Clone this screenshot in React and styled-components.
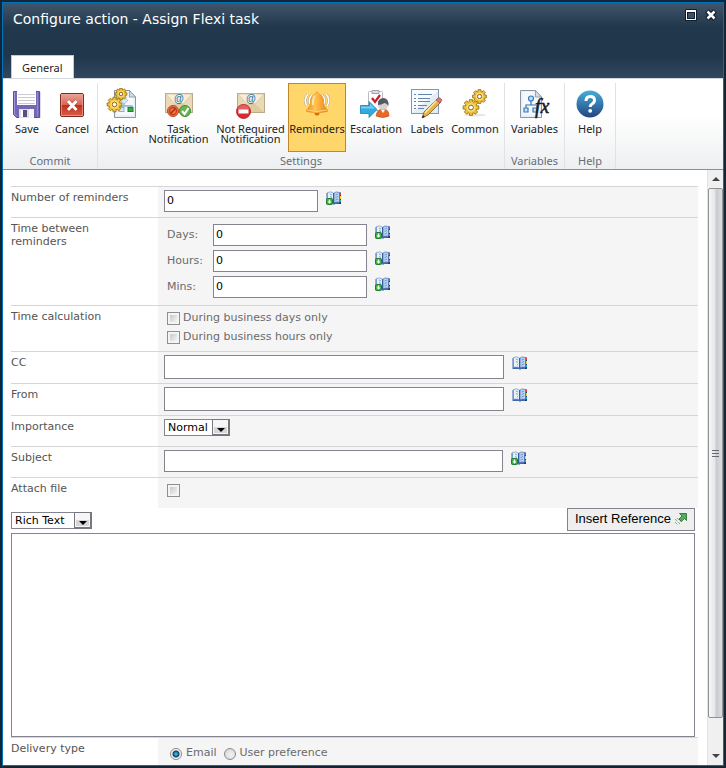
import React from "react";
import styled, { createGlobalStyle } from "styled-components";

const Global = createGlobalStyle`
  * { box-sizing: border-box; }
  html, body { margin: 0; background: #3c4650; }
  body, input, select, textarea { font-family: "DejaVu Sans", sans-serif; font-size: 11px; }
`;

/* ---------- window frame ---------- */

const Backdrop = styled.div`
  height: 100vh;
  min-height: 480px;
  padding: 2px;
  background: #142536;
`;

const Dialog = styled.section`
  height: 100%;
  display: flex;
  flex-direction: column;
  border: 1px solid #0072bc;
  background: #fff;
  overflow: hidden;
`;

const Header = styled.header`
  display: flex;
  flex-direction: column;
  justify-content: space-between;
  flex: none;
  height: 75px;
  background: linear-gradient(#41566b, #21374c 24px, #21374c 54px, #31475f);
`;

const TitleBar = styled.div`
  display: flex;
  align-items: flex-start;
  justify-content: space-between;
  padding: 6px 6px 0 10px;
`;

const Title = styled.h1`
  margin: 0;
  font-size: 14px;
  line-height: 20px;
  font-weight: normal;
  color: #fff;
`;

const WindowButtons = styled.div`
  display: flex;
  gap: 8px;
`;

const WindowButton = styled.button`
  display: flex;
  padding: 0;
  border: 0;
  background: none;
`;

const Tabs = styled.div`
  display: flex;
  padding-left: 8px;
`;

const Tab = styled.button`
  height: 23px;
  padding: 1px 10px 0;
  border: 1px solid #c3cad2;
  border-bottom: 0;
  background: #fff;
  color: #222;
  font: 11px "Noto Sans", sans-serif;
`;

/* ---------- ribbon ---------- */

const Ribbon = styled.nav`
  display: flex;
  flex: none;
  height: 92px;
  padding-top: 4px;
  border-top: 1px solid #d3d8de;
  border-bottom: 1px solid #8b9097;
  background: linear-gradient(#fff 40%, #eeeff1);
`;

const Group = styled.div`
  display: flex;
  flex-direction: column;
  justify-content: space-between;
  padding: 0 2px;
  border-right: 1px solid #e0e2e5;
`;

const GroupButtons = styled.div`
  display: flex;
`;

const GroupName = styled.div`
  height: 16px;
  color: #666d78;
  text-align: center;
  font: 11px/15px "Noto Sans", sans-serif;
`;

const Tool = styled.button`
  display: flex;
  flex-direction: column;
  align-items: center;
  gap: 4px;
  width: ${(p) => p.$width}px;
  height: 69px;
  padding: 4px 0 0;
  border: 1px solid ${(p) => (p.$active ? "#c2862b" : "transparent")};
  background: ${(p) => (p.$active ? "#ffd669" : "transparent")};
  color: #222;
  font: 11px/10px "Noto Sans", sans-serif;
`;

const ToolText = styled.span`
  text-align: center;
`;

/* ---------- form ---------- */

const Body = styled.main`
  display: flex;
  flex: 1;
  min-height: 0;
`;

const Form = styled.form`
  flex: 1;
  min-width: 0;
  overflow: hidden;
  padding: 16px 9px 0 8px;
`;

const Row = styled.div`
  display: grid;
  grid-template-columns: 147px 1fr;
  min-height: ${(p) => p.$height}px;
  border-top: 1px solid #d6d6d6;
  color: #555;
`;

const Name = styled.label`
  padding: 4px 20px 0 0;
  line-height: 13px;
`;

const Field = styled.div`
  display: flex;
  flex-direction: ${(p) => (p.$stack ? "column" : "row")};
  align-items: flex-start;
  gap: ${(p) => p.$gap ?? 8}px;
  padding: ${(p) => p.$pad ?? "3px 0 0 6px"};
  background: #f5f5f5;
  color: #6b6b6b;
`;

const TextBox = styled.input`
  width: ${(p) => p.$width}px;
  height: ${(p) => p.$height ?? 22}px;
  padding: 0 2px 2px;
  border: 1px solid #83848f;
  border-radius: 0;
  background: #fff;
  color: #000;
`;

const Duration = styled.div`
  display: grid;
  grid-template-columns: 46px auto;
  line-height: 22px;
`;

const DurationEntry = styled.div`
  display: flex;
  gap: 8px;
`;

const LookupButton = styled.button`
  display: flex;
  align-self: flex-start;
  padding: 1px 0 0;
  border: 0;
  background: none;
`;

const Choice = styled.label`
  display: flex;
  align-items: center;
  gap: 3px;
  line-height: 13px;
`;

const ChoiceText = styled.span`
  padding-bottom: 2px;
`;

const CheckBox = styled.input`
  appearance: none;
  width: 13px;
  height: 13px;
  margin: 0;
  border: 1px solid #8e8f8f;
  background: linear-gradient(135deg, #c4c8cd, #f4f4f4) content-box, #f4f4f4;
  padding: 2px;
`;

const Radio = styled.input`
  appearance: none;
  width: 12px;
  height: 12px;
  margin: 0 1px 0 0;
  border: 1px solid #8a8a8a;
  border-radius: 50%;
  background: radial-gradient(circle at 60% 60%, #f2f2f2, #cfd2d6);
  &:checked {
    background: radial-gradient(circle, #5cc3ef 0, #1879a8 2px, #123a58 3px, #f4f4f4 4px);
  }
`;

const SelectBox = styled.span`
  position: relative;
  display: inline-flex;
  width: ${(p) => p.$width}px;
  height: 17px;
`;

const SelectInput = styled.select`
  appearance: none;
  width: 100%;
  padding: 0 18px 0 3px;
  border: 1px solid #83848f;
  border-radius: 0;
  background: #fff;
  color: #000;
`;

const SelectArrow = styled.svg`
  position: absolute;
  top: 0;
  right: 0;
  pointer-events: none;
`;

const EditorBar = styled.div`
  display: flex;
  align-items: center;
  justify-content: space-between;
  height: 25px;
  padding-right: 3px;
`;

const InsertButton = styled.button`
  display: flex;
  align-items: center;
  gap: 3px;
  height: 23px;
  margin-bottom: 2px;
  padding: 0 6px 2px 7px;
  border: 1px solid #83848f;
  background: #efefef;
  color: #000;
  font: 13px "Liberation Sans", sans-serif;
`;

const EditorPane = styled.div`
  display: flex;
  padding-right: 3px;
`;

const Editor = styled.textarea`
  flex: 1;
  height: 204px;
  border: 1px solid #83848f;
  resize: none;
`;

/* ---------- scroll bar ---------- */

const ScrollBar = styled.div`
  display: flex;
  flex-direction: column;
  flex: none;
  width: 16px;
  border-left: 1px solid #e3e3e3;
  background: #f0f0f0;
`;

const ScrollEnd = styled.button`
  display: flex;
  align-items: center;
  justify-content: center;
  height: 18px;
  padding: 0;
  border: 0;
  background: none;
`;

const Thumb = styled.div`
  display: flex;
  align-items: center;
  justify-content: center;
  flex: 1;
  margin-bottom: 29px;
  border: 1px solid #8f9195;
  border-radius: 2px;
  background: linear-gradient(90deg, #f6f6f6, #e6e7e9 45%, #c8cacf 55%, #dcdde0);
`;

/* ---------- icons ---------- */

const gearPath = (cx, cy, r) => {
  const teeth = 8;
  const points = [];
  for (let i = 0; i < teeth; i++) {
    const a = (i * 2 * Math.PI) / teeth;
    [[-0.3, 0.74], [-0.2, 1], [0.2, 1], [0.3, 0.74]].forEach(([d, k]) =>
      points.push(`${(cx + Math.cos(a + d) * r * k).toFixed(2)} ${(cy + Math.sin(a + d) * r * k).toFixed(2)}`)
    );
  }
  return `M${points.join("L")}Z`;
};

const Gear = ({ x, y, r }) => (
  <g>
    <path d={gearPath(x, y, r)} fill="#efc238" stroke="#98700f" strokeWidth=".9" />
    <circle cx={x} cy={y} r={r * 0.54} fill="#f8de83" />
    <circle cx={x} cy={y} r={r * 0.3} fill="#fff" stroke="#8a6612" strokeWidth="1" />
  </g>
);

const Icon = ({ children }) => (
  <svg width="32" height="32" viewBox="0 0 32 32" aria-hidden="true">{children}</svg>
);

const Page = ({ x }) => (
  <g>
    <path d={`M${x} 2.500h15l6 6.500v20.500h-21Z`} fill="#eaf0f9" stroke="#8895a5" />
    <path d={`M${x + 2} 4h11v6h6v17h-17Z`} fill="#fff" opacity=".55" />
    <path d={`M${x + 15} 2.500v6.500h6Z`} fill="#d3dce8" stroke="#8895a5" strokeWidth=".8" />
  </g>
);

const At = styled.text`
  font: bold 10px "Liberation Sans", sans-serif;
  fill: #1c80b3;
  text-anchor: middle;
`;

const Envelope = () => (
  <g>
    <rect x="2.500" y="5.500" width="27" height="19" fill="#ead9b6" stroke="#b9aa88" />
    <path d="M3 24l10-9h6l10 9Z" fill="#dfcba0" />
    <path d="M3 6h26l-8 9q-1 1-3 1h-4q-2 0-3-1Z" fill="#f7edd8" stroke="#d3c29d" strokeWidth=".7" />
    <At x="16" y="14">@</At>
  </g>
);

const SaveIcon = () => (
  <Icon>
    <path d="M4 4h26v26H7l-3-3Z" fill="#c5c4cf" opacity=".6" />
    <path d="M2.500 3.500h26v26h-23l-3-3Z" fill="#7567b8" stroke="#5c4e9d" />
    <path d="M3.500 4v22l2 2" fill="none" stroke="#a096d8" />
    <path d="M6 3h19v14H6Z" fill="#fff" />
    <path d="M7 6.500h17M7 9.500h17M7 12.500h17M7 15.500h17" stroke="#cbcbd2" />
    <path d="M8 21h15v9H8Z" fill="#dedee6" />
    <path d="M10 22h6v7h-6Z" fill="#57507d" />
    <path d="M10 22h2v7h-2Z" fill="#fff" />
    <path d="M18 21h5v9h-5Z" fill="#f7f7fa" />
    <path d="M26.500 4v25" stroke="#9388cc" />
  </Icon>
);

const CancelIcon = () => (
  <Icon>
    <defs>
      <linearGradient id="cancel" x2="0" y2="1">
        <stop stopColor="#eaa79c" />
        <stop offset=".48" stopColor="#d96755" />
        <stop offset=".5" stopColor="#c32d18" />
        <stop offset="1" stopColor="#d9604a" />
      </linearGradient>
    </defs>
    <rect x="4.500" y="5.500" width="23" height="23" rx="1.500" fill="url(#cancel)" stroke="#7d2a20" />
    <rect x="5.500" y="6.500" width="21" height="21" fill="none" stroke="#eda397" opacity=".7" />
    <path d="M12 13l8.500 9M20.500 13l-8.500 9" stroke="#8d2619" strokeWidth="4.500" opacity=".4" />
    <path d="M12 13l8.500 9M20.500 13l-8.500 9" stroke="#fff" strokeWidth="3" />
  </Icon>
);

const ActionIcon = () => (
  <Icon>
    <Page x={8.5} />
    <path d="M18 13v5h8v3M18 18h-4v3" fill="none" stroke="#86afd0" strokeWidth="1.3" />
    <path d="M18 9l4 3.500-4 3.500-4-3.500Z" fill="#d4e8fa" stroke="#8fbbe0" strokeWidth=".7" />
    <rect x="22" y="19.500" width="5" height="4" fill="#36ae3c" stroke="#24802c" />
    <rect x="13" y="19.500" width="5" height="4" fill="#d9e9f5" stroke="#88b3cf" />
    <Gear x={15} y={6} r={6} />
    <Gear x={8.5} y={16.5} r={7.5} />
  </Icon>
);

const TaskIcon = () => (
  <Icon>
    <Envelope />
    <circle cx="10" cy="23" r="5.500" fill="#f1764a" stroke="#c9451d" />
    <circle cx="10" cy="23" r="3.500" fill="none" stroke="#b9401f" strokeWidth="1.300" />
    <path d="M7.500 25.500l5-5" stroke="#a42c15" strokeWidth="1.500" />
    <circle cx="22" cy="23" r="5.500" fill="#69b651" stroke="#3f8a38" />
    <path d="M19 23l2.500 3 4-6" fill="none" stroke="#fff" strokeWidth="2" />
  </Icon>
);

const NotRequiredIcon = () => (
  <Icon>
    <Envelope />
    <circle cx="8.500" cy="23.500" r="7" fill="#d92c31" stroke="#a8181e" strokeWidth=".8" />
    <path d="M2.500 21a6.500 6.500 0 0 1 12 0q-6 3-12 0Z" fill="#f58a86" opacity=".55" />
    <rect x="3.500" y="21.500" width="10" height="4" fill="#fff" />
  </Icon>
);

const BellIcon = () => (
  <Icon>
    <defs>
      <linearGradient id="bell" x2="1" y2="0">
        <stop stopColor="#f28a12" />
        <stop offset=".4" stopColor="#ffc554" />
        <stop offset="1" stopColor="#ef8112" />
      </linearGradient>
    </defs>
    <g fill="none" stroke="#b5a98f" strokeWidth="2.600">
      <path d="M7 6q-5 6-1 12M11 7q-4 4-2 9M25 6q5 6 1 12M21 7q4 4 2 9" />
    </g>
    <g fill="none" stroke="#fff" strokeWidth="1.500">
      <path d="M7 6q-5 6-1 12M11 7q-4 4-2 9M25 6q5 6 1 12M21 7q4 4 2 9" />
    </g>
    <circle cx="16" cy="25" r="2.500" fill="#d9680b" />
    <path d="M14.500 6q0-2 1.500-2t1.500 2q5 1 5 8 0 4 4 8v1.500q-10.500 3-21 0V22q4-4 4-8 0-7 5-8Z" fill="url(#bell)" stroke="#e98a1c" strokeWidth=".5" />
    <path d="M6 22q10 3 20 0" fill="none" stroke="#fbd27a" />
    <path d="M13.500 8q-2 3-1.500 9" fill="none" stroke="#ffe5a8" strokeWidth="1.800" />
  </Icon>
);

const EscalationIcon = () => (
  <Icon>
    <rect x="8.500" y="3.500" width="14" height="19" rx="1" fill="#fff" stroke="#b9bbc1" />
    <path d="M12 2.500h7v3h-7Z" fill="#dcdde2" stroke="#9fa2a9" />
    <path d="M12 10l3 4 5-7" fill="none" stroke="#c91f27" strokeWidth="2.200" />
    <path d="M0.500 17.500H9v-4l8 8-8 8v-4H.5Z" fill="#32abe0" stroke="#137db2" strokeWidth=".8" />
    <path d="M1 18.500h9v-3l5 5H1Z" fill="#79cdf0" />
    <path d="M16 28q1-7 7-7 6 0 6 7-6 3-13 0Z" fill="#e96927" stroke="#bc4814" strokeWidth=".6" />
    <circle cx="23" cy="17" r="5" fill="#d9d2cf" />
    <path d="M18 17q-1-6 5-7 6 0 5.500 8-2-3-4-3-3 2-6.500 2Z" fill="#565a61" />
    <path d="M21 22l2 3 2-3Z" fill="#fff" />
  </Icon>
);

const LabelsIcon = () => (
  <Icon>
    <rect x="0.500" y="1.500" width="27" height="24" fill="#f8fbff" stroke="#7c96b4" />
    <path d="M1 25L27 3v22Z" fill="#e3ebf5" />
    <path d="M3 6.500h2M7 6.500h14M3 10.500h2M7 10.500h12M3 13.500h2M7 13.500h12M3 17.500h2M7 17.500h9M3 20.500h2M7 20.500h6" stroke="#6285ac" />
    <path d="M11 30l2-6 13-13 4 3-13 13Z" fill="#e5b34c" stroke="#825f25" strokeWidth=".8" />
    <path d="M14 25L26 12" stroke="#ffe795" strokeWidth="1.500" />
    <path d="M25 12l2-2q2-1 4 2l-2 3Z" fill="#d97c7f" stroke="#8f4048" strokeWidth=".7" />
    <path d="M11 30l1-3 2 2Z" fill="#222" />
  </Icon>
);

const CommonIcon = () => (
  <Icon>
    <ellipse cx="16" cy="27" rx="11" ry="1.500" fill="#e6e6e6" />
    <Gear x={20.5} y={8.5} r={7} />
    <Gear x={12} y={19.5} r={8} />
  </Icon>
);

const Formula = styled.text`
  font: italic 20px "Liberation Serif", serif;
  fill: #17191d;
  stroke: #17191d;
  stroke-width: 0.5px;
`;

const VariablesIcon = () => (
  <Icon>
    <Page x={1.5} />
    <path d="M12 12v5M7 20v-3h11v4" fill="none" stroke="#3775af" strokeWidth="1.200" />
    <circle cx="12" cy="10.500" r="2.500" fill="#bfdef3" stroke="#367bb9" strokeWidth="1.200" />
    <path d="M5 20h4v4H5ZM14 20h4v4h-4Z" fill="#cce1f3" stroke="#367bb9" strokeWidth="1.200" />
    <Formula x="16" y="25">fx</Formula>
  </Icon>
);

const HelpIcon = () => (
  <Icon>
    <defs>
      <linearGradient id="help" x2="0" y2="1">
        <stop stopColor="#48add9" />
        <stop offset="1" stopColor="#214481" />
      </linearGradient>
    </defs>
    <circle cx="16" cy="16" r="13.500" fill="url(#help)" />
    <path d="M12 13q0-4.500 4.200-4.500 4.300 0 4.300 3.800 0 2.200-2.500 3.700-1.800 1-1.800 3" fill="none" stroke="#fff" strokeWidth="3" />
    <circle cx="16.200" cy="22.800" r="1.900" fill="#fff" />
  </Icon>
);

const BookIcon = ({ add }) => (
  <svg width="16" height="14" viewBox="0 0 16 14" aria-hidden="true">
    <path d="M.5 2H15v11H9l-1 1-1-1H.5Z" fill="#3f69aa" />
    <path d="M13 1.500h2v11.500h-2Z" fill="#263c66" />
    <path d="M14 2h1v2h-1Z" fill="#f03a48" />
    <path d="M14 5h1v3h-1Z" fill="#f6d32c" />
    <path d="M14 9h1v2h-1Z" fill="#22b2d0" />
    <path d="M1.500 1.500q4-1.500 6.200.8v9.700q-2-1.500-6.200-.8Z" fill="#e6f0fd" stroke="#6f94c9" strokeWidth=".7" />
    <path d="M13.500 1.500q-4-1.500-5.800.8v9.700q2-1.500 5.800-.8Z" fill="#b9d2f3" stroke="#4d76b6" strokeWidth=".7" />
    <path d="M7.700 2v10" stroke="#2c5292" />
    <path d="M9.500 4l2.500-1M9.500 6.500l2.500-1M9.500 9l2.500-1M4 3l2 1M4 5.500l2 1M5 8.500l1 .5" stroke="#6389c4" strokeWidth=".8" />
    {add && (
      <g>
        <rect x=".500" y="7.500" width="6" height="6" rx="1" fill="#3bab48" stroke="#1b8029" />
        <path d="M2.800 8.500h1.400v2h1.300l-2 2.200-2-2.200h1.300Z" fill="#fff" />
      </g>
    )}
  </svg>
);

const Lookup = ({ add, label }) => (
  <LookupButton type="button" aria-label={label}>
    <BookIcon add={add} />
  </LookupButton>
);

const Select = ({ id, width, options, label }) => (
  <SelectBox $width={width}>
    <SelectInput id={id} aria-label={label}>
      {options.map((o) => <option key={o}>{o}</option>)}
    </SelectInput>
    <SelectArrow width="18" height="17" viewBox="0 0 18 17" aria-hidden="true">
      <path d="M.500 1h16.500v15H.500Z" fill="#f6f6f6" />
      <path d="M.500 0v17M0 .500h18" stroke="#77777f" />
      <path d="M17 0v17M0 16h18" stroke="#77777f" strokeWidth="2" />
      <path d="M2 8h13v6H2Z" fill="#d6d6d8" />
      <path d="M5 9h8l-4 4Z" fill="#000" />
    </SelectArrow>
  </SelectBox>
);

/* ---------- content ---------- */

const groups = [
  { name: "Commit", tools: [
    { name: "Save", icon: SaveIcon, width: 44 },
    { name: "Cancel", icon: CancelIcon, width: 46 },
  ] },
  { name: "Settings", tools: [
    { name: "Action", icon: ActionIcon, width: 44 },
    { name: "Task Notification", icon: TaskIcon, width: 69 },
    { name: "Not Required Notification", icon: NotRequiredIcon, width: 75 },
    { name: "Reminders", icon: BellIcon, width: 58, active: true },
    { name: "Escalation", icon: EscalationIcon, width: 60 },
    { name: "Labels", icon: LabelsIcon, width: 42 },
    { name: "Common", icon: CommonIcon, width: 54 },
  ] },
  { name: "Variables", tools: [{ name: "Variables", icon: VariablesIcon, width: 55 }] },
  { name: "Help", tools: [{ name: "Help", icon: HelpIcon, width: 46 }] },
];

const durations = ["Days", "Hours", "Mins"];

export default function App() {
  return (
    <Backdrop>
      <Global />
      <Dialog aria-label="Configure action">
        <Header>
          <TitleBar>
            <Title>Configure action - Assign Flexi task</Title>
            <WindowButtons>
              <WindowButton aria-label="Maximize">
                <svg width="12" height="12" viewBox="0 0 12 12">
                  <rect width="12" height="12" rx="1" fill="#101e2b" />
                  <path d="M1 1h10v10H1Z" fill="#fff" />
                  <path d="M2 3h8v7H2Z" fill="#101e2b" />
                  <path d="M3 4h6v5H3Z" fill="#3a5066" />
                </svg>
              </WindowButton>
              <WindowButton aria-label="Close">
                <svg width="12" height="12" viewBox="0 0 12 12">
                  <path d="M2 2l8 8M10 2l-8 8" stroke="#101e2b" strokeWidth="5" />
                  <path d="M2.500 2.500l7 7M9.500 2.500l-7 7" stroke="#fff" strokeWidth="2.500" />
                </svg>
              </WindowButton>
            </WindowButtons>
          </TitleBar>
          <Tabs><Tab>General</Tab></Tabs>
        </Header>

        <Ribbon>
          {groups.map((g) => (
            <Group key={g.name}>
              <GroupButtons>
                {g.tools.map(({ name, icon: ToolIcon, width, active }) => (
                  <Tool key={name} $width={width} $active={active}>
                    <ToolIcon />
                    <ToolText>{name}</ToolText>
                  </Tool>
                ))}
              </GroupButtons>
              <GroupName>{g.name}</GroupName>
            </Group>
          ))}
        </Ribbon>

        <Body>
          <Form>
            <Row $height={31}>
              <Name htmlFor="count">Number of reminders</Name>
              <Field>
                <TextBox id="count" $width={154} defaultValue="0" />
                <Lookup add label="Look up number of reminders" />
              </Field>
            </Row>
            <Row $height={88}>
              <Name as="div">Time between reminders</Name>
              <Field $stack $gap={4} $pad="6px 0 7px 9px">
                {durations.map((d) => (
                  <Duration key={d}>
                    <label htmlFor={d}>{d}:</label>
                    <DurationEntry>
                      <TextBox id={d} $width={154} defaultValue="0" />
                      <Lookup add label={`Look up ${d}`} />
                    </DurationEntry>
                  </Duration>
                ))}
              </Field>
            </Row>
            <Row $height={46}>
              <Name as="div">Time calculation</Name>
              <Field $stack $gap={4} $pad="5px 0 0 9px">
                <Choice><CheckBox type="checkbox" /><ChoiceText>During business days only</ChoiceText></Choice>
                <Choice><CheckBox type="checkbox" /><ChoiceText>During business hours only</ChoiceText></Choice>
              </Field>
            </Row>
            <Row $height={32}>
              <Name htmlFor="cc">CC</Name>
              <Field><TextBox id="cc" $width={340} $height={24} /><Lookup label="Look up CC" /></Field>
            </Row>
            <Row $height={32}>
              <Name htmlFor="from">From</Name>
              <Field><TextBox id="from" $width={340} $height={24} /><Lookup label="Look up From" /></Field>
            </Row>
            <Row $height={31}>
              <Name htmlFor="importance">Importance</Name>
              <Field><Select id="importance" width={66} options={["Normal", "Low", "High"]} /></Field>
            </Row>
            <Row $height={31}>
              <Name htmlFor="subject">Subject</Name>
              <Field><TextBox id="subject" $width={339} /><Lookup add label="Look up Subject" /></Field>
            </Row>
            <Row $height={31}>
              <Name htmlFor="attach">Attach file</Name>
              <Field $pad="6px 0 0 9px"><CheckBox id="attach" type="checkbox" /></Field>
            </Row>
            <EditorBar>
              <Select width={81} options={["Rich Text", "Plain Text"]} label="Text format" />
              <InsertButton type="button">
                Insert Reference
                <svg width="14" height="14" viewBox="0 0 14 14" aria-hidden="true">
                  <path d="M5.500 1.500h7v7l-2-2-3 3-2.500-2.500 3-3Z" fill="#4fae5b" stroke="#23682c" strokeWidth=".8" />
                  <path d="M1 7l5 5M3 6l4 4M1 10l3 3" stroke="#438a47" strokeDasharray="1 1" />
                </svg>
              </InsertButton>
            </EditorBar>
            <EditorPane><Editor aria-label="Message body" /></EditorPane>
            <Row $height={31}>
              <Name as="div">Delivery type</Name>
              <Field $pad="8px 0 0 12px" $gap={7}>
                <Choice><Radio type="radio" name="delivery" defaultChecked /><ChoiceText>Email</ChoiceText></Choice>
                <Choice><Radio type="radio" name="delivery" /><ChoiceText>User preference</ChoiceText></Choice>
              </Field>
            </Row>
          </Form>
          <ScrollBar>
            <ScrollEnd aria-label="Scroll up">
              <svg width="8" height="4" viewBox="0 0 8 4"><path d="M4 0l4 4H0Z" fill="#444" /></svg>
            </ScrollEnd>
            <Thumb>
              <svg width="8" height="9" viewBox="0 0 8 9"><path d="M0 1.500h7M0 4.500h7M0 7.500h7" stroke="#666a70" /></svg>
            </Thumb>
            <ScrollEnd aria-label="Scroll down">
              <svg width="8" height="4" viewBox="0 0 8 4"><path d="M0 0h8L4 4Z" fill="#444" /></svg>
            </ScrollEnd>
          </ScrollBar>
        </Body>
      </Dialog>
    </Backdrop>
  );
}
